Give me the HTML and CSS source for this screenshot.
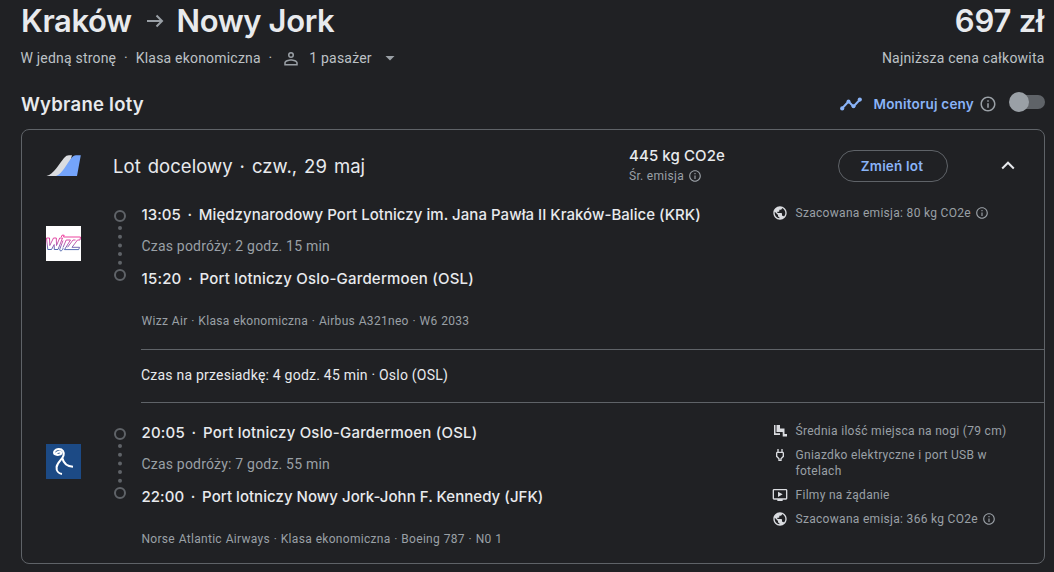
FILE: index.html
```html
<!DOCTYPE html>
<html lang="pl">
<head>
  <meta charset="UTF-8" />
  <meta name="viewport" content="width=device-width, initial-scale=1" />
  <title>Kraków – Nowy Jork</title>
  <link rel="stylesheet" href="styles.css">
</head>
<body>

  <!-- Shared icons -->
  <svg class="sprite" width="0" height="0">
    <symbol id="i-info" viewBox="0 0 24 24"><path d="M11 17h2v-6h-2v6zm1-15C6.480 2 2 6.480 2 12s4.480 10 10 10 10-4.480 10-10S17.520 2 12 2zm0 18c-4.410 0-8-3.590-8-8s3.590-8 8-8 8 3.590 8 8-3.590 8-8 8zM11 9h2V7h-2v2z"/></symbol>
    <symbol id="i-globe" viewBox="0 0 24 24"><path d="M12 2C6.480 2 2 6.480 2 12s4.480 10 10 10 10-4.480 10-10S17.520 2 12 2zm-1 17.930c-3.950-.49-7-3.850-7-7.930 0-.62.080-1.210.21-1.790L9 15v1c0 1.100.9 2 2 2v1.930zm6.900-2.540c-.26-.81-1-1.390-1.900-1.390h-1v-3c0-.55-.45-1-1-1H8v-2h2c.55 0 1-.45 1-1V7h2c1.100 0 2-.9 2-2v-.41c2.930 1.190 5 4.060 5 7.410 0 2.080-.8 3.970-2.100 5.390z"/></symbol>
    <symbol id="i-timeline" viewBox="0 0 12 71">
      <circle cx="6" cy="6" r="5" fill="none" stroke="#5f6368" stroke-width="2"/>
      <circle cx="6" cy="18" r="2"/><circle cx="6" cy="26.700" r="2"/><circle cx="6" cy="35.400" r="2"/><circle cx="6" cy="44.100" r="2"/><circle cx="6" cy="52.800" r="2"/>
      <circle cx="6" cy="65" r="5" fill="none" stroke="#5f6368" stroke-width="2"/>
    </symbol>
  </svg>

  <header class="top">
    <h1 class="route">
      <span class="from">Kraków</span>
      <svg class="arrow" width="24" height="24" viewBox="0 0 24 24"><path d="M4 12H19M13.500 6.500L19 12l-5.500 5.500"/></svg>
      <span class="to">Nowy Jork</span>
    </h1>
    <div class="total">697 zł</div>
  </header>

  <div class="details">
    <div class="trip">
      <span>W jedną stronę</span><span class="dot">·</span><span>Klasa ekonomiczna</span><span class="dot">·</span>
      <svg class="person" width="18" height="18" viewBox="0 0 24 24"><path d="M12 4a4 4 0 1 0 0 8 4 4 0 0 0 0-8zm0 2a2 2 0 1 1 0 4 2 2 0 0 1 0-4zM12 13.500c-3 0-9 1.500-9 4.700V22h18v-3.800c0-3.200-6-4.700-9-4.700zm7 6.500H5v-1.800c0-1 3.600-2.700 7-2.700s7 1.700 7 2.700z"/></svg>
      <span>1 pasażer</span>
      <svg class="caret" width="10" height="5" viewBox="0 0 10 5"><path d="M0.500 0h9L5 4.500z"/></svg>
    </div>
    <div class="lowest">Najniższa cena całkowita</div>
  </div>

  <div class="selected">
    <h2>Wybrane loty</h2>
    <div class="track">
      <svg class="trend" width="22" height="14" viewBox="0 0 22 14"><path d="M2 11.500L8.500 4.500 13.500 9.500 20 2.500" fill="none" stroke="#8ab4f8" stroke-width="2"/><circle cx="2.200" cy="11.400" r="2.100"/><circle cx="8.500" cy="4.500" r="2"/><circle cx="13.500" cy="9.300" r="2"/><circle cx="19.800" cy="2.600" r="2.100"/></svg>
      <span class="track-label">Monitoruj ceny</span>
      <svg class="track-info" width="18" height="18"><use href="#i-info"/></svg>
      <span class="switch"></span>
    </div>
  </div>

  <main class="card">
    <div class="card-head">
      <svg class="tails" width="35" height="21" viewBox="0 0 35 21"><path d="M0.500 21C8 19 13 9 18 3 20 1 21 .3 23 .3h3L20 21z" fill="#dadce0"/><path d="M10 21C17 18 20 10 25 3.500 27 1 28 .3 30 .3h4.800L31 21z" fill="#74a4fb"/></svg>
      <h3>Lot docelowy · czw., 29 maj</h3>
      <div class="co2">
        <div class="co2-value">445 kg CO2e</div>
        <div class="co2-note">Śr. emisja <svg width="14" height="14"><use href="#i-info"/></svg></div>
      </div>
      <button class="change">Zmień lot</button>
      <svg class="chevron" width="14" height="9" viewBox="0 0 14 9"><path d="M1.200 7.500L7 1.700l5.800 5.800"/></svg>
    </div>

    <section class="leg">
      <svg class="airline" width="35" height="35" viewBox="0 0 35 35">
        <defs><linearGradient id="wizz" x1="0" y1="9" x2="0" y2="25" gradientUnits="userSpaceOnUse"><stop offset=".1" stop-color="#ed2c93"/><stop offset=".55" stop-color="#b34fa8"/><stop offset=".9" stop-color="#405aa9"/></linearGradient></defs>
        <rect width="35" height="35" fill="#fff"/>
        <path d="M.5 12h3l.3 7.500L7.500 12h2.800l.2 7.500L13.700 12h2.800L12 23.500H8.300L8.200 18.500 5.500 23.500H1.800zM15.300 11l.7-1.800h2.200l-.7 1.800h17L34 14h-2.500l-5.500 7.300h7.500l-.8 2.300H18.500l6-9.600h-4.300L17 21.500M17 14.500l-3 8c-.8 2 .5 3 1.800 2 1-.8 1.200-1.500 1.200-2.500M29.500 14H27l-5.500 7.300" fill="none" stroke="url(#wizz)" stroke-width=".9"/>
      </svg>
      <svg class="timeline" width="12" height="71"><use href="#i-timeline"/></svg>
      <div class="stops">
        <div class="stop">13:05<span class="sep">·</span>Międzynarodowy Port Lotniczy im. Jana Pawła II Kraków-Balice (KRK)</div>
        <div class="duration">Czas podróży: 2 godz. 15 min</div>
        <div class="stop stop-osl">15:20<span class="sep">·</span>Port lotniczy Oslo-Gardermoen (OSL)</div>
        <div class="plane">Wizz Air · Klasa ekonomiczna · Airbus A321neo · W6 2033</div>
      </div>
      <ul class="features">
        <li><svg class="icon" width="16" height="16"><use href="#i-globe"/></svg><span>Szacowana emisja: 80 kg CO2e <svg class="info" width="14" height="14"><use href="#i-info"/></svg></span></li>
      </ul>
    </section>

    <div class="layover">Czas na przesiadkę: 4 godz. 45 min · Oslo (OSL)</div>

    <section class="leg">
      <svg class="airline" width="35" height="35" viewBox="0 0 35 35">
        <rect width="35" height="35" fill="#1c4a85"/>
        <path d="M9.300 10.300c3 1.200 6.200.2 6-1.700C15 6.800 10.300 7.500 9.300 10.300 6.700 9.500 8.500 5 12.800 5c4 0 5.600 3.200 4.700 6.500-1 4-6.300 6.500-6.900 11.500-.4 3.500 1.900 6.500 5.400 7M16.300 14c1.200 5 5.200 8.500 10.700 8.800" fill="none" stroke="#fff" stroke-width="2.100"/>
      </svg>
      <svg class="timeline" width="12" height="71"><use href="#i-timeline"/></svg>
      <div class="stops">
        <div class="stop stop-osl">20:05<span class="sep">·</span>Port lotniczy Oslo-Gardermoen (OSL)</div>
        <div class="duration">Czas podróży: 7 godz. 55 min</div>
        <div class="stop">22:00<span class="sep">·</span>Port lotniczy Nowy Jork-John F. Kennedy (JFK)</div>
        <div class="plane">Norse Atlantic Airways · Klasa ekonomiczna · Boeing 787 · N0 1</div>
      </div>
      <ul class="features">
        <li><svg class="icon" width="16" height="16" viewBox="0 0 16 16"><path d="M2 2h1.500v8.300H8V12H2zM4.500 2H8v3.500h4.500V11H15v2.500h-4.300V9H4.500z"/></svg><span>Średnia ilość miejsca na nogi (79 cm)</span></li>
        <li><svg class="icon" width="16" height="16" viewBox="0 0 24 24"><path d="M16 9v4.660l-3.500 3.510V19h-1v-1.830L8 13.650V9h8m0-6h-2v4h-4V3H8v4h-.01C6.900 6.990 6 7.890 6 8.980v5.520L9.500 18v3h5v-3l3.500-3.510V9c0-1.100-.9-2-2-2V3z"/></svg><span>Gniazdko elektryczne i port USB w fotelach</span></li>
        <li><svg class="icon" width="16" height="16" viewBox="0 0 24 24"><path d="M9 7v8l7-4zM21 3H3c-1.100 0-2 .9-2 2v12c0 1.100.9 2 2 2h5v2h8v-2h5c1.100 0 2-.9 2-2V5c0-1.100-.9-2-2-2zm0 14H3V5h18v12z"/></svg><span>Filmy na żądanie</span></li>
        <li><svg class="icon" width="16" height="16"><use href="#i-globe"/></svg><span>Szacowana emisja: 366 kg CO2e <svg class="info" width="14" height="14"><use href="#i-info"/></svg></span></li>
      </ul>
    </section>
  </main>

</body>
</html>
```
FILE: styles.css
```css
* {
  box-sizing: border-box;
}
body {
  margin: 0;
  padding: 0 9px 0 21px;
  height: 572px;
  overflow: hidden;
  background: #202124;
  color: #e8eaed;
  font-family: Roboto, sans-serif;
  font-size: 14px;
}
h1, h2, h3, ul {
  margin: 0;
  padding: 0;
}
svg {
  display: block;
  flex: none;
  fill: #9aa0a6;
}
.sprite {
  position: absolute;
}
h1, h2, h3, .total, .track-label, .co2-value, .change, .stop {
  font-family: Inter, sans-serif;
  white-space: nowrap;
}

/* Route and price */
.top {
  display: flex;
  justify-content: space-between;
  height: 42px;
  line-height: 42px;
}
.route {
  display: flex;
  align-items: center;
  font-size: 31px;
  font-weight: 600;
  letter-spacing: -0.4px;
}
.arrow {
  margin: 0 10px 0 11px;
  fill: none;
  stroke: #9aa0a6;
  stroke-width: 2;
}
.total {
  margin-right: 1px;
  font-size: 31px;
  font-weight: 600;
  letter-spacing: -0.2px;
}
.details {
  display: flex;
  justify-content: space-between;
  height: 32px;
  line-height: 32px;
  letter-spacing: 0.2px;
  color: #bdc1c6;
}
.trip {
  display: flex;
  align-items: center;
  margin-left: -0.5px;
}
.lowest {
  margin-right: 0.5px;
}
.dot {
  width: 19.5px;
  text-align: center;
}
.person {
  margin: 0 9px 0 2px;
}
.caret {
  margin-left: 13.5px;
}

/* Selected flights heading */
.selected {
  display: flex;
  justify-content: space-between;
  height: 55px;
}
h2 {
  font-size: 18.5px;
  font-weight: 600;
  line-height: 61px;
  letter-spacing: 0.25px;
}
.track {
  display: flex;
  align-items: center;
  height: 60px;
}
.trend {
  fill: #8ab4f8;
}
.track-label {
  margin-left: 11px;
  color: #8ab4f8;
  font-size: 13.5px;
  font-weight: 600;
  letter-spacing: 0.2px;
}
.track-info {
  margin-left: 5px;
}
.switch {
  width: 34px;
  height: 14px;
  margin: -4px 0 0 14px;
  border-radius: 7px;
  background: #5f6368;
}
.switch::before {
  content: "";
  display: block;
  width: 20px;
  height: 20px;
  margin: -3px 0 0 -2px;
  border-radius: 50%;
  background: #9aa0a6;
}

/* Flight card */
.card {
  height: 435px;
  border: 1px solid #5f6368;
  border-radius: 8px;
}
.card-head {
  display: grid;
  grid-template-columns: 67px 516px 209px 110px 1fr;
  align-items: center;
  height: 71px;
  padding-left: 24px;
}
h3 {
  font-size: 18.5px;
  font-weight: 400;
  letter-spacing: 0.05px;
  word-spacing: 1.7px;
}
.co2-value {
  font-size: 15px;
  font-weight: 500;
  line-height: 20px;
  letter-spacing: 0.1px;
}
.co2-note {
  display: flex;
  align-items: center;
  gap: 4px;
  color: #9aa0a6;
  font-size: 12px;
  line-height: 20px;
  letter-spacing: 0.3px;
}
.change {
  height: 32px;
  padding: 0 2px 0 0;
  border: 1px solid #5f6368;
  border-radius: 16px;
  background: none;
  color: #8ab4f8;
  font-size: 13.5px;
  font-weight: 600;
  letter-spacing: 0.2px;
}
.chevron {
  margin-left: 53px;
  fill: none;
  stroke: #e8eaed;
  stroke-width: 2;
}
.leg {
  display: grid;
  grid-template-columns: 68px 27.5px 630px 1fr;
  height: 148px;
  padding-left: 24px;
}
.airline {
  margin-top: 25px;
}
.timeline {
  margin-top: 9px;
  fill: #5f6368;
}
.stop {
  height: 28px;
  line-height: 28px;
  font-size: 15px;
  font-weight: 500;
  letter-spacing: 0.04px;
}
.stop-osl {
  letter-spacing: 0.2px;
}
.sep {
  display: inline-block;
  width: 18px;
  text-align: center;
}
.duration {
  height: 36px;
  line-height: 34px;
  color: #9aa0a6;
  letter-spacing: 0.2px;
}
.plane {
  margin-top: 20px;
  color: #9aa0a6;
  font-size: 12px;
  line-height: 16px;
  letter-spacing: 0.3px;
  word-spacing: 0.4px;
}
.features {
  display: flex;
  flex-direction: column;
  gap: 8px;
  padding-top: 4px;
  list-style: none;
  color: #9aa0a6;
  font-size: 12px;
  line-height: 16px;
  letter-spacing: 0.3px;
}
.features li {
  display: flex;
  gap: 8px;
  width: 250px;
}
.icon {
  fill: #dadce0;
}
.info {
  display: inline-block;
  margin-left: 0.5px;
  vertical-align: -3px;
}
.layover {
  height: 54px;
  margin: 0 0 16px 119px;
  border-top: 1px solid #5f6368;
  border-bottom: 1px solid #5f6368;
  line-height: 51px;
  letter-spacing: 0.22px;
}
```
